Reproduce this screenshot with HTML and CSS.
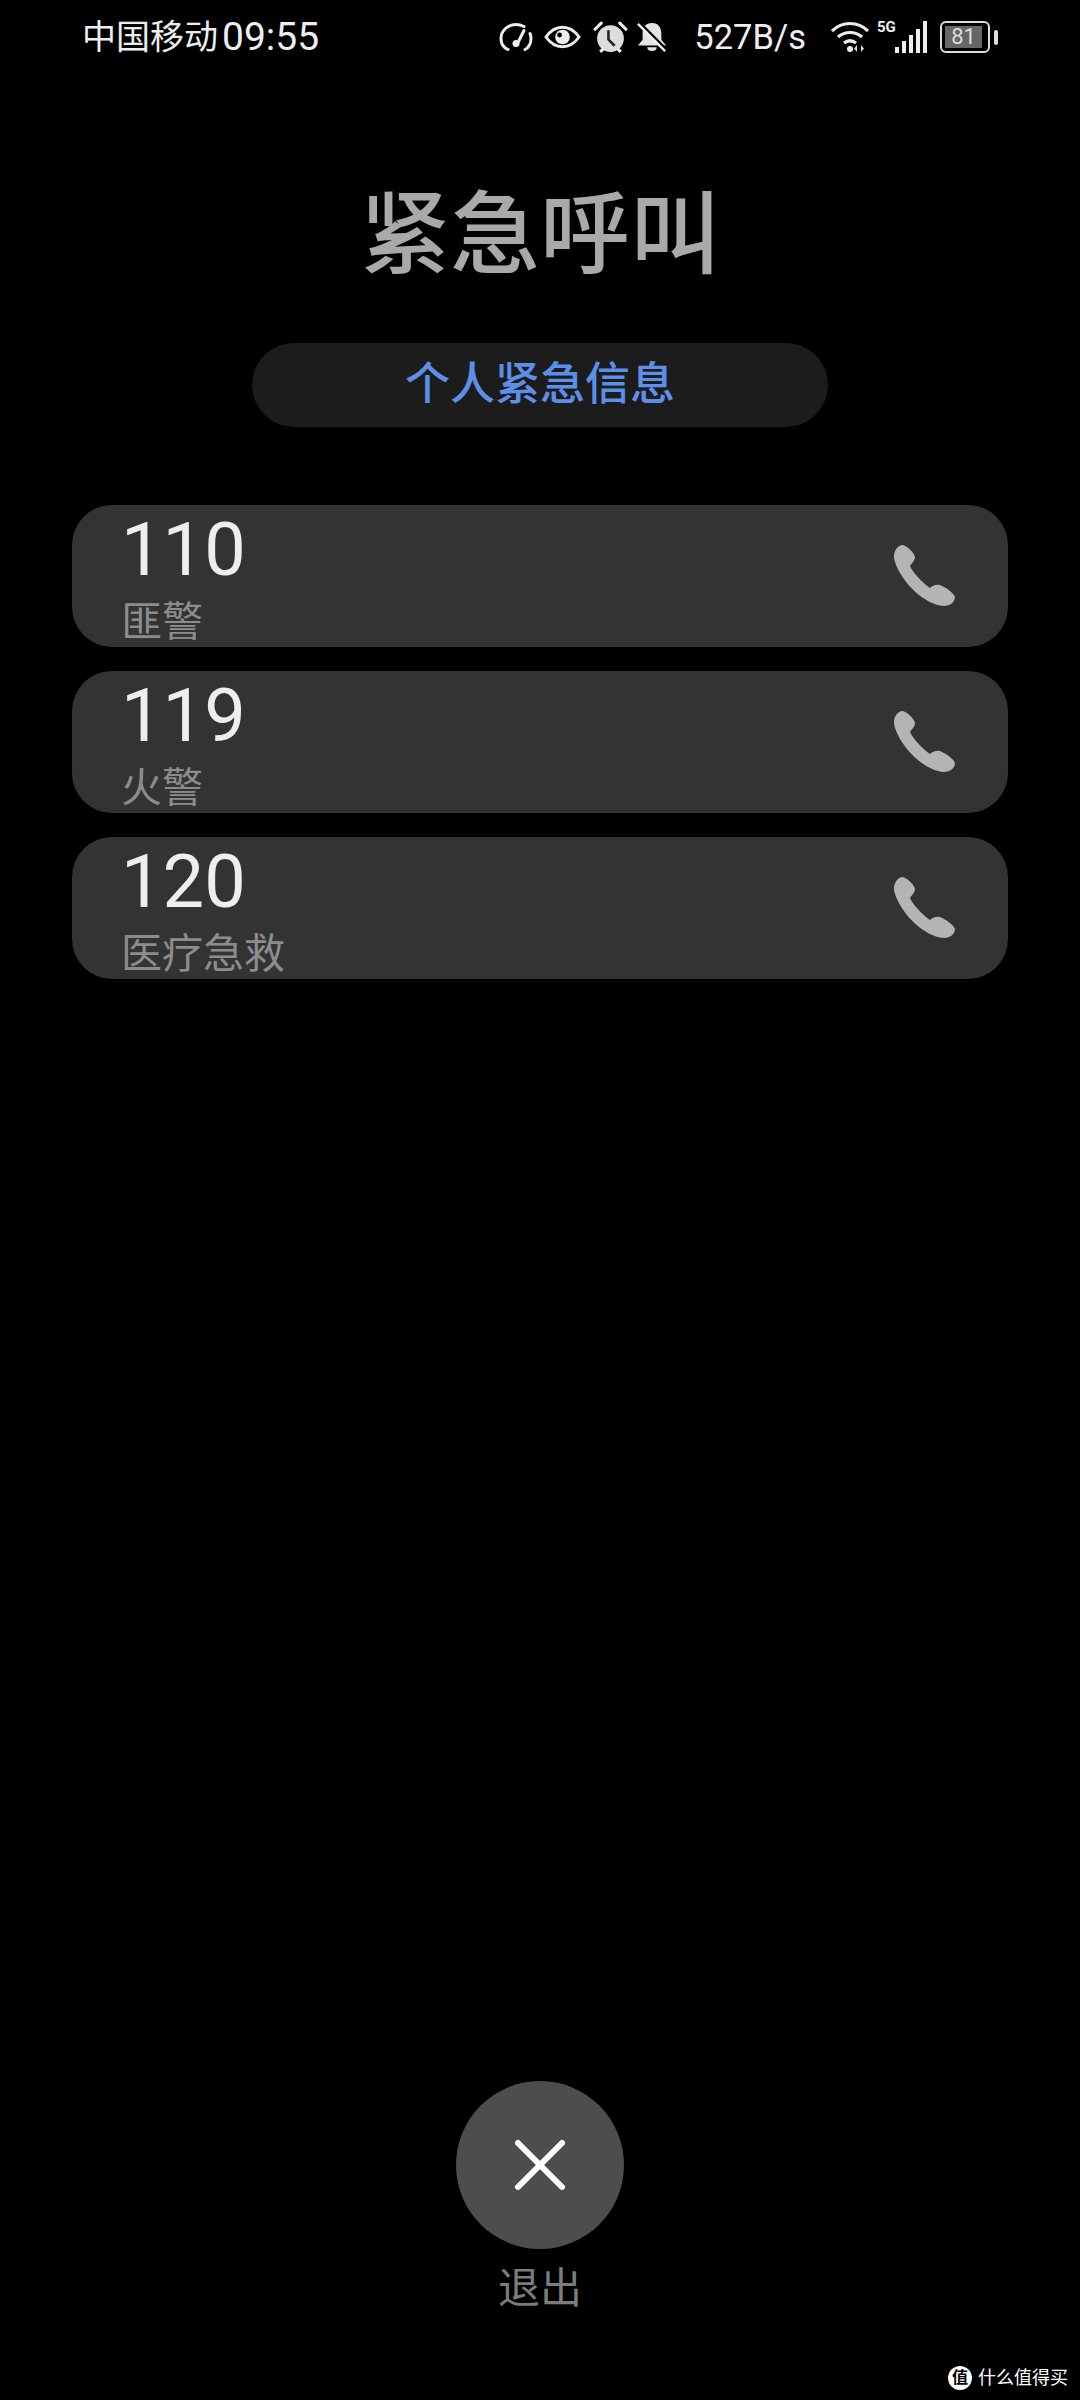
FILE: index.html
```html
<!DOCTYPE html>
<html>
<head>
    <title>紧急呼叫</title>
    <link rel="stylesheet" href="styles.css">
</head>
<body>
    <div class="screen">
        <div class="status-bar">
            <div class="status-left">
                <span class="carrier">中国移动</span>
                <span class="clock">09:55</span>
            </div>
            <div class="status-right">
                <svg class="ic-speed" viewBox="0 0 34 30"><path d="M9 27C4 25 2 20 2 16 2 8 9 2 17 2c3 0 6 1 8 2M31 11c1 2 1 3 1 5 0 4-2 9-6 11" fill="none" stroke="#eee" stroke-width="3" stroke-linecap="round"/><path d="M25 8l-6 12" stroke="#eee" stroke-width="3" stroke-linecap="round"/><circle cx="17" cy="21" r="3.5" fill="#eee"/></svg>
                <svg class="ic-eye" viewBox="0 0 38 24"><path d="M2 12C7 5 13 2 19 2s12 3 17 10c-5 7-11 10-17 10S7 19 2 12z" fill="none" stroke="#eee" stroke-width="3"/><circle cx="19" cy="12" r="7.5" fill="#eee"/><circle cx="16" cy="10" r="2.5" fill="#000"/></svg>
                <svg class="ic-alarm" viewBox="0 0 34 32"><circle cx="17" cy="17" r="13" fill="#ddd"/><path d="M2 8l6-6M32 8l-6-6" stroke="#eee" stroke-width="3" stroke-linecap="round"/><path d="M15 9v9l6 6" fill="none" stroke="#222" stroke-width="2.5"/><path d="M7 30l3-3M27 30l-3-3" stroke="#eee" stroke-width="3"/></svg>
                <svg class="ic-bell" viewBox="0 0 32 32"><path d="M16 1c7 0 10 5 10 12v6l5 6H1l5-6v-7C6 6 9 1 16 1z" fill="#e4e4e4"/><path d="M11 27h10c0 3-2 4-5 4s-5-1-5-4z" fill="#e4e4e4"/><path d="M3 1l29 29" stroke="#000" stroke-width="3"/><path d="M1 2l29 29" stroke="#eee" stroke-width="2.500"/></svg>
                <span class="speed">527B/s</span>
                <svg class="ic-wifi" viewBox="0 0 38 32"><path d="M1 10c10-10 26-10 36 0M7 16c7-6 17-6 24 0M13 22c4-3 8-3 12 0" fill="none" stroke="#eee" stroke-width="3.200"/><circle cx="19" cy="28" r="3" fill="#eee"/><path d="M26 24v7l-3-3.500zM30 24v7l3-3.500z" fill="#ddd"/></svg>
                <div class="signal">
                    <span class="net">5G</span>
                    <div class="bars">
                        <i class="bar bar-1"></i>
                        <i class="bar bar-2"></i>
                        <i class="bar bar-3"></i>
                        <i class="bar bar-4"></i>
                        <i class="bar bar-5"></i>
                    </div>
                </div>
                <div class="battery">
                    <div class="battery-body"><span class="battery-level">81</span></div>
                    <div class="battery-nub"></div>
                </div>
            </div>
        </div>

        <h1 class="title">紧急呼叫</h1>

        <div class="info-pill">个人紧急信息</div>

        <div class="call-list">
            <div class="call-card">
                <div class="call-text">
                    <div class="call-number">110</div>
                    <div class="call-name">匪警</div>
                </div>
                <svg class="ic-phone" viewBox="0 0 62 62"><path d="M2 17C-1 9 3 1 9 0c4 0 12 7 13 12 0 4-4 7-5 9 3 7 13 17 20 22 2-2 6-4 10-3 5 2 14 8 15 12 0 5-5 9-11 9C32 60 9 38 2 17z"/></svg>
            </div>
            <div class="call-card">
                <div class="call-text">
                    <div class="call-number">119</div>
                    <div class="call-name">火警</div>
                </div>
                <svg class="ic-phone" viewBox="0 0 62 62"><path d="M2 17C-1 9 3 1 9 0c4 0 12 7 13 12 0 4-4 7-5 9 3 7 13 17 20 22 2-2 6-4 10-3 5 2 14 8 15 12 0 5-5 9-11 9C32 60 9 38 2 17z"/></svg>
            </div>
            <div class="call-card">
                <div class="call-text">
                    <div class="call-number">120</div>
                    <div class="call-name">医疗急救</div>
                </div>
                <svg class="ic-phone" viewBox="0 0 62 62"><path d="M2 17C-1 9 3 1 9 0c4 0 12 7 13 12 0 4-4 7-5 9 3 7 13 17 20 22 2-2 6-4 10-3 5 2 14 8 15 12 0 5-5 9-11 9C32 60 9 38 2 17z"/></svg>
            </div>
        </div>

        <div class="exit">
            <div class="exit-button">
                <svg class="ic-close" viewBox="0 0 48 48"><path d="M2 2l44 44M46 2L2 46" stroke="#fff" stroke-width="6" stroke-linecap="round"/></svg>
            </div>
            <div class="exit-label">退出</div>
        </div>

        <div class="watermark">
            <span class="watermark-logo">值</span>
            <span class="watermark-text">什么值得买</span>
        </div>
    </div>
</body>
</html>
```

FILE: styles.css
```css
* {
    box-sizing: border-box;
}

html,
body {
    margin: 0;
    padding: 0;
    background-color: #000;
}

body {
    font-family: Roboto, "Noto Sans CJK SC", sans-serif;
}

.screen {
    position: relative;
    width: 1080px;
    height: 2400px;
    display: flex;
    flex-direction: column;
    align-items: center;
    overflow: hidden;
}

/* status bar */
.status-bar {
    width: 100%;
    height: 74px;
    padding: 0 82px 0 82px;
    display: flex;
    justify-content: space-between;
    align-items: center;
    color: #eee;
}

.status-left {
    display: flex;
    align-items: center;
    gap: 4px;
}

.carrier {
    font-size: 34px;
    line-height: 74px;
}

.clock {
    font-size: 39px;
    line-height: 74px;
}

.status-right {
    display: flex;
    align-items: center;
}

.ic-speed {
    width: 34px;
    height: 31px;
}

.ic-eye {
    width: 37px;
    height: 24px;
    margin-left: 11px;
}

.ic-alarm {
    width: 35px;
    height: 33px;
    margin-left: 12px;
}

.ic-bell {
    width: 30px;
    height: 32px;
    margin-left: 9px;
}

.speed {
    font-size: 34.5px;
    margin-left: 27px;
}

.ic-wifi {
    width: 38px;
    height: 32px;
    margin-left: 25px;
}

.signal {
    position: relative;
    width: 50px;
    height: 32px;
    margin-left: 8px;
}

.net {
    position: absolute;
    left: 0;
    top: -1px;
    font-size: 15px;
    font-weight: 700;
    line-height: 14px;
}

.bars {
    height: 100%;
    display: flex;
    justify-content: flex-end;
    align-items: flex-end;
    gap: 3px;
}

.bar {
    width: 4px;
    background-color: #eee;
}

.bar-1 { height: 6px; }
.bar-2 { height: 12px; }
.bar-3 { height: 18px; }
.bar-4 { height: 24px; }
.bar-5 { height: 32px; }

.battery {
    display: flex;
    align-items: center;
    margin-left: 13px;
}

.battery-body {
    width: 50px;
    height: 32px;
    padding: 3px;
    border: 2px solid #ddd;
    border-radius: 6px;
}

.battery-level {
    display: block;
    width: 37px;
    height: 100%;
    background-color: #666;
    color: #ddd;
    font-size: 22px;
    line-height: 22px;
    text-align: center;
}

.battery-nub {
    width: 4px;
    height: 15px;
    margin-left: 4px;
    background-color: #ddd;
    border-radius: 2px;
}

/* heading */
.title {
    margin: 107px 0 0;
    font-size: 90px;
    font-weight: 500;
    line-height: 110px;
    color: #a9a9a9;
}

.info-pill {
    width: 576px;
    height: 84px;
    margin-top: 52px;
    background-color: #1c1c1c;
    border-radius: 42px;
    color: #5c90e8;
    font-size: 45px;
    font-weight: 500;
    line-height: 84px;
    text-align: center;
}

/* call cards */
.call-list {
    width: 936px;
    margin-top: 78px;
    display: flex;
    flex-direction: column;
    gap: 24px;
}

.call-card {
    height: 142px;
    padding: 0 53px 0 49px;
    display: flex;
    justify-content: space-between;
    align-items: center;
    background-color: #333;
    border-radius: 40px;
}

.call-text {
    align-self: flex-start;
    padding-top: 3px;
}

.call-number {
    font-size: 74px;
    line-height: 84px;
    color: #eee;
}

.call-name {
    margin-top: 4px;
    font-size: 41px;
    line-height: 52px;
    color: #8c8c8c;
}

.ic-phone {
    width: 62px;
    height: 62px;
    fill: #b4b4b4;
    overflow: visible;
}

/* exit */
.exit {
    margin-top: auto;
    margin-bottom: 81px;
    display: flex;
    flex-direction: column;
    align-items: center;
}

.exit-button {
    width: 168px;
    height: 168px;
    display: flex;
    justify-content: center;
    align-items: center;
    background-color: #4d4d4d;
    border-radius: 50%;
}

.ic-close {
    width: 48px;
    height: 48px;
    overflow: visible;
}

.exit-label {
    margin-top: 10px;
    font-size: 42px;
    line-height: 60px;
    color: #7c7c7c;
}

/* site watermark, sits over the page */
.watermark {
    position: absolute;
    right: 12px;
    bottom: 8px;
    display: flex;
    align-items: center;
    gap: 6px;
    color: #fff;
    font-size: 18px;
    line-height: 28px;
}

.watermark-logo {
    width: 24px;
    height: 24px;
    background-color: #fff;
    border-radius: 50%;
    color: #000;
    font-size: 16px;
    font-weight: 700;
    line-height: 24px;
    text-align: center;
}
```
